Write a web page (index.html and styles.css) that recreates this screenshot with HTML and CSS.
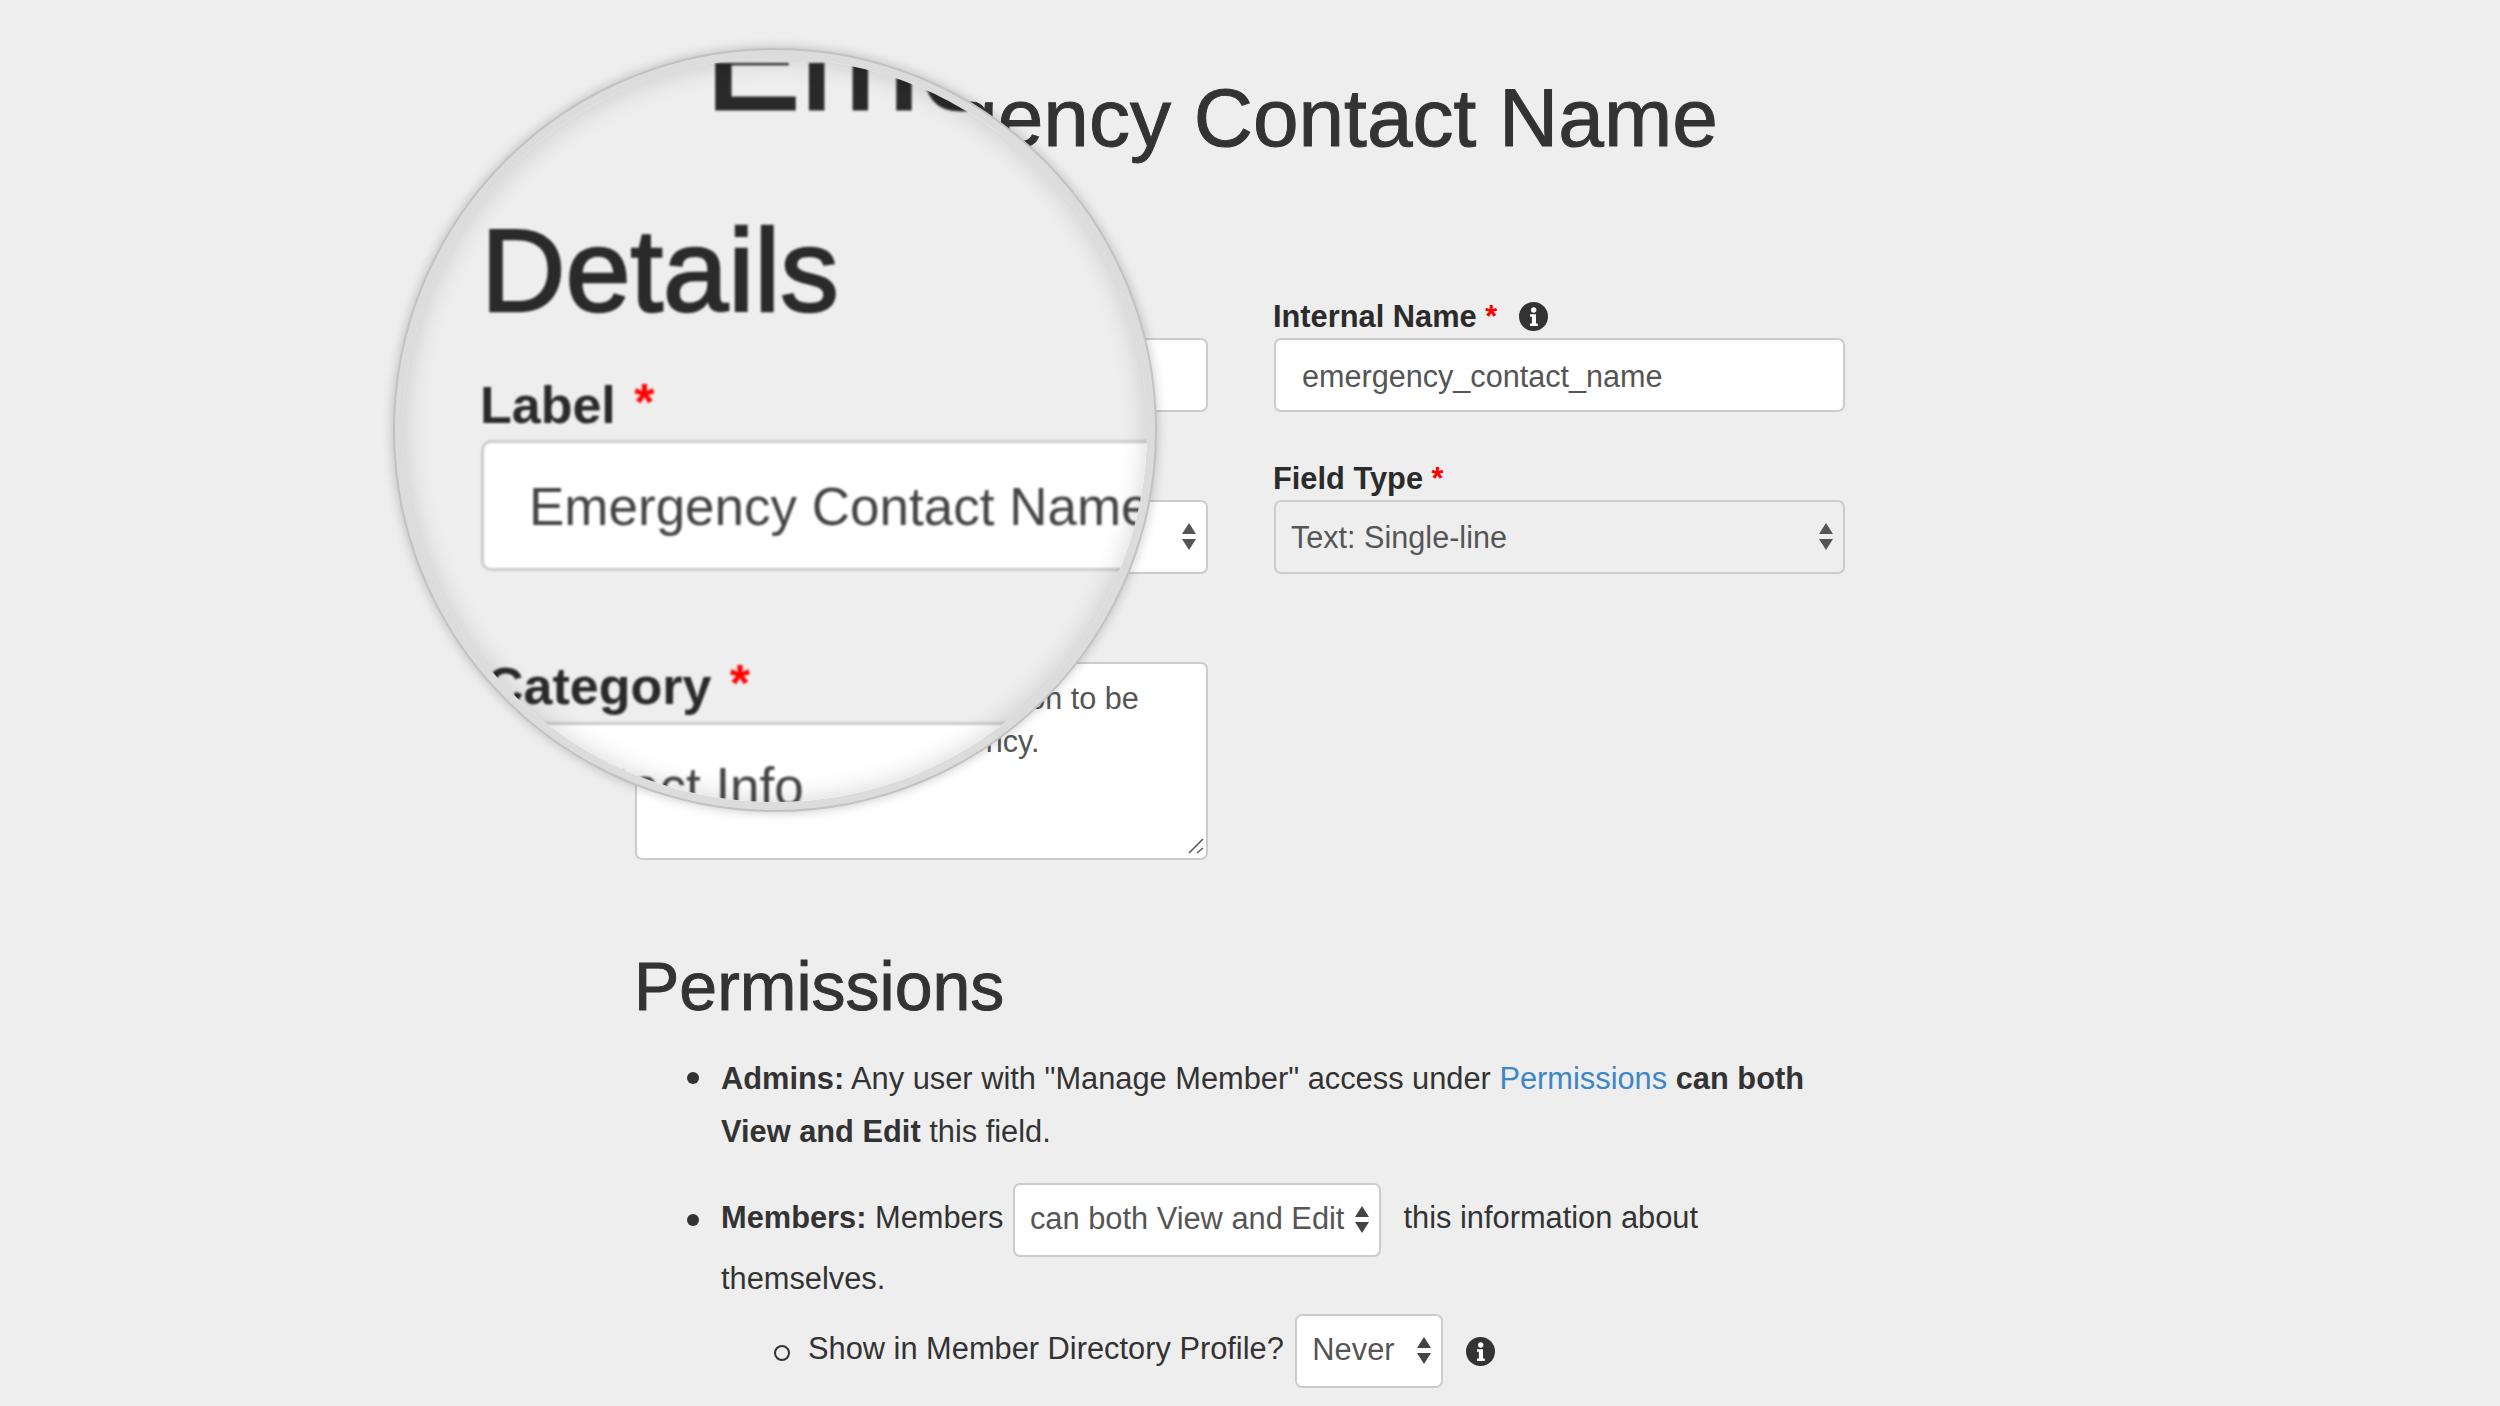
FILE: index.html
```html
<!DOCTYPE html>
<html lang="en">
<head>
<meta charset="utf-8">
<title>Emergency Contact Name</title>
<link rel="stylesheet" href="styles.css">
</head>
<body>
<svg class="defs" width="0" height="0" aria-hidden="true">
  <symbol id="arrows" viewBox="0 0 14 27"><path d="M7 0 14 11H0Z M0 16H14L7 27Z"/></symbol>
  <symbol id="info" viewBox="0 0 29 29"><circle cx="14.5" cy="14.5" r="14.5"/><circle cx="14.7" cy="8" r="2.7" fill="#fff"/><path fill="#fff" d="M11 12.2h6v9.2h1.8v2.6H11v-2.6h1.9v-6.6H11z"/></symbol>
</svg>
<main class="page">
  <h1 class="title">Emergency Contact Name</h1>
  <h2 class="section">Details</h2>
  <div class="fields">
    <div class="field">
      <label class="label">Label <span class="req">*</span></label>
      <input class="control" type="text" value="Emergency Contact Name">
    </div>
    <div class="field">
      <label class="label">Internal Name <span class="req">*</span> <svg class="info info-label"><use href="#info"/></svg></label>
      <input class="control" type="text" value="emergency_contact_name">
    </div>
    <div class="field">
      <label class="label">Category <span class="req">*</span></label>
      <div class="select-wrap">
        <select class="control select"><option>Contact Info</option></select>
        <svg class="arrows"><use href="#arrows"/></svg>
      </div>
    </div>
    <div class="field">
      <label class="label">Field Type <span class="req">*</span></label>
      <div class="select-wrap">
        <select class="control select disabled" disabled><option>Text: Single-line</option></select>
        <svg class="arrows"><use href="#arrows"/></svg>
      </div>
    </div>
    <div class="field">
      <label class="label">Help Text</label>
      <div class="area-wrap">
        <textarea class="control area">Enter the name of the person to be contacted in an emergency.</textarea>
        <svg class="grip" viewBox="0 0 16 16"><path d="M15 1 1 15M15 10 9 15"/></svg>
      </div>
    </div>
  </div>
  <h2 class="section permissions">Permissions</h2>
  <ul class="rules">
    <li class="rule-admins"><b>Admins:</b> Any user with "Manage Member" access under <a href="#" class="link">Permissions</a> <b>can both View and Edit</b> this field.</li>
    <li class="rule-members"><b>Members:</b> Members
      <span class="inline-wrap wide"><select class="inline-select"><option>can both View and Edit</option></select><svg class="arrows"><use href="#arrows"/></svg></span>
      this information about themselves.
      <ul class="subrules">
        <li>Show in Member Directory Profile?
          <span class="inline-wrap narrow"><select class="inline-select"><option>Never</option></select><svg class="arrows"><use href="#arrows"/></svg></span>
          <svg class="info info-inline"><use href="#info"/></svg>
        </li>
      </ul>
    </li>
  </ul>
</main>
<aside class="lens">
  <div class="lens-content">
    <div class="lens-title-clip"><div class="lens-title">Emergency</div></div>
    <div class="lens-heading">Details</div>
    <div class="lens-label">Label <span class="req lens-req">*</span></div>
    <div class="lens-input">Emergency Contact Name</div>
    <div class="lens-label lens-category">Category <span class="req lens-req">*</span></div>
    <div class="lens-select">Contact Info</div>
  </div>
</aside>
</body>
</html>
```
FILE: styles.css
```css
* { box-sizing: border-box; }
html, body { margin: 0; height: 1406px; overflow: hidden; }
body {
  position: relative;
  background: #eee;
  color: #333;
  font-family: "Liberation Sans", Arial, sans-serif;
  font-size: 30.8px;
  line-height: 53px;
}
.defs { position: absolute; }
.page { width: 1210px; margin-left: 635px; padding-top: 73px; }
.title { margin: 0; padding-right: 6px; font-size: 82px; line-height: 90px; font-weight: 400; text-align: center; -webkit-text-stroke: 1px #333; }
.section { margin: 27px 0 0 -1px; font-size: 68px; line-height: 74px; font-weight: 400; -webkit-text-stroke: .9px #333; }
.fields {
  display: grid;
  grid-template-columns: 573px 571px;
  column-gap: 66px;
  row-gap: 46px;
  margin-top: 32px;
}
.field { display: flex; flex-direction: column; min-width: 0; }
.label { display: block; height: 42px; margin-left: -1px; font-weight: 700; line-height: 42px; color: #2b2b2b; white-space: nowrap; }
.req { color: #f00; }
.info { display: inline-block; fill: #333; width: 29px; height: 29px; }
.info-label { margin-left: 13px; vertical-align: -4px; }
.info-inline { margin-left: 14px; vertical-align: middle; }
.control {
  display: block;
  width: 100%;
  height: 74px;
  padding: 3px 26px 0;
  background: #fff;
  border: 2px solid #ccc;
  border-radius: 7px;
  color: #555;
  font: inherit;
  font-size: 30.6px;
  line-height: 40px;
  outline: 0;
}
.select-wrap, .area-wrap { position: relative; }
.select { appearance: none; -webkit-appearance: none; padding: 0 15px; }
.disabled { background: #eee; opacity: 1; }
.arrows { position: absolute; right: 12px; top: 23px; width: 14px; height: 27px; fill: #555; pointer-events: none; }
.area { height: 198px; padding: 13px 24px 13px 29px; line-height: 43px; resize: none; }
.grip { position: absolute; right: 4px; bottom: 6px; width: 16px; height: 16px; fill: none; stroke: #555; stroke-width: 1.5px; }
.permissions { margin-top: 89px; }
.rules { margin: 29px 0 0; padding-left: 86px; list-style: none; }
.rules li { position: relative; }
.rules > li::before {
  content: "";
  position: absolute;
  left: -34px;
  width: 12px;
  height: 12px;
  border-radius: 50%;
  background: #333;
}
.rule-admins { margin-bottom: 29px; }
.rule-admins::before { top: 20px; }
.rule-members::before { top: 27px; }
.link { color: #3d87c7; text-decoration: none; }
.inline-wrap {
  position: relative;
  display: inline-block;
  height: 74px;
  margin: -4px 0 -5px;
  vertical-align: middle;
}
.inline-select {
  appearance: none;
  -webkit-appearance: none;
  display: block;
  width: 100%;
  height: 74px;
  padding: 0 0 2px 15px;
  background: #fff;
  border: 2px solid #ccc;
  border-radius: 7px;
  color: #555;
  font: inherit;
  line-height: 40px;
}
.inline-wrap .arrows { top: 23px; fill: #444; }
.wide { width: 368px; margin-left: 1px; margin-right: 14px; }
.narrow { width: 148px; margin-left: 3px; margin-top: -4px; margin-bottom: -4px; }
.subrules { margin: 13px 0 0; padding-left: 87px; list-style: none; }
.subrules > li::before {
  content: "";
  position: absolute;
  left: -34px;
  top: 27px;
  width: 12px;
  height: 12px;
  border-radius: 50%;
  border: 2px solid #333;
}

.lens {
  position: absolute;
  left: 395px;
  top: 50px;
  width: 760px;
  height: 760px;
  border-radius: 50%;
  overflow: hidden;
  background: #eee;
  border: 8px solid #dcdcdc;
  box-shadow: 0 0 0 2px #c2c2c2, 0 0 12px 2px rgba(0, 0, 0, .22);
}
.lens::after {
  content: "";
  position: absolute;
  inset: 0;
  border-radius: 50%;
  box-shadow: inset 0 0 26px rgba(0, 0, 0, .17);
  pointer-events: none;
}
.lens-content { margin: -8px 0 0 -8px; padding-left: 85px; width: 1100px; filter: blur(.8px); color: #2a2a2a; }
.lens-title-clip { margin-top: 13px; height: 62px; overflow: hidden; }
.lens-title { margin: -75px 0 0 225px; font-size: 143px; line-height: 143px; white-space: nowrap; -webkit-text-stroke: 3px #2a2a2a; }
.lens-heading { margin: 88px 0 0 1px; font-size: 117px; line-height: 115px; -webkit-text-stroke: 2.5px #2a2a2a; }
.lens-label { height: 60px; margin-top: 44px; font-size: 52px; line-height: 60px; font-weight: 700; }
.lens-req { margin-left: 4px; vertical-align: 3px; }
.lens-input {
  margin: 8px 0 0 1px;
  height: 131px;
  padding-left: 45px;
  background: #fff;
  border: 3px solid #ccc;
  border-radius: 10px;
  color: #444;
  font-size: 53px;
  line-height: 128px;
  white-space: nowrap;
}
.lens-category { margin: 82px 0 0 6px; }
.lens-select {
  margin: 9px 0 0 -100px;
  height: 220px;
  padding-left: 138px;
  background: #fff;
  border-top: 3px solid #ccc;
  color: #444;
  font-size: 53px;
  line-height: 123px;
  white-space: nowrap;
}
```
